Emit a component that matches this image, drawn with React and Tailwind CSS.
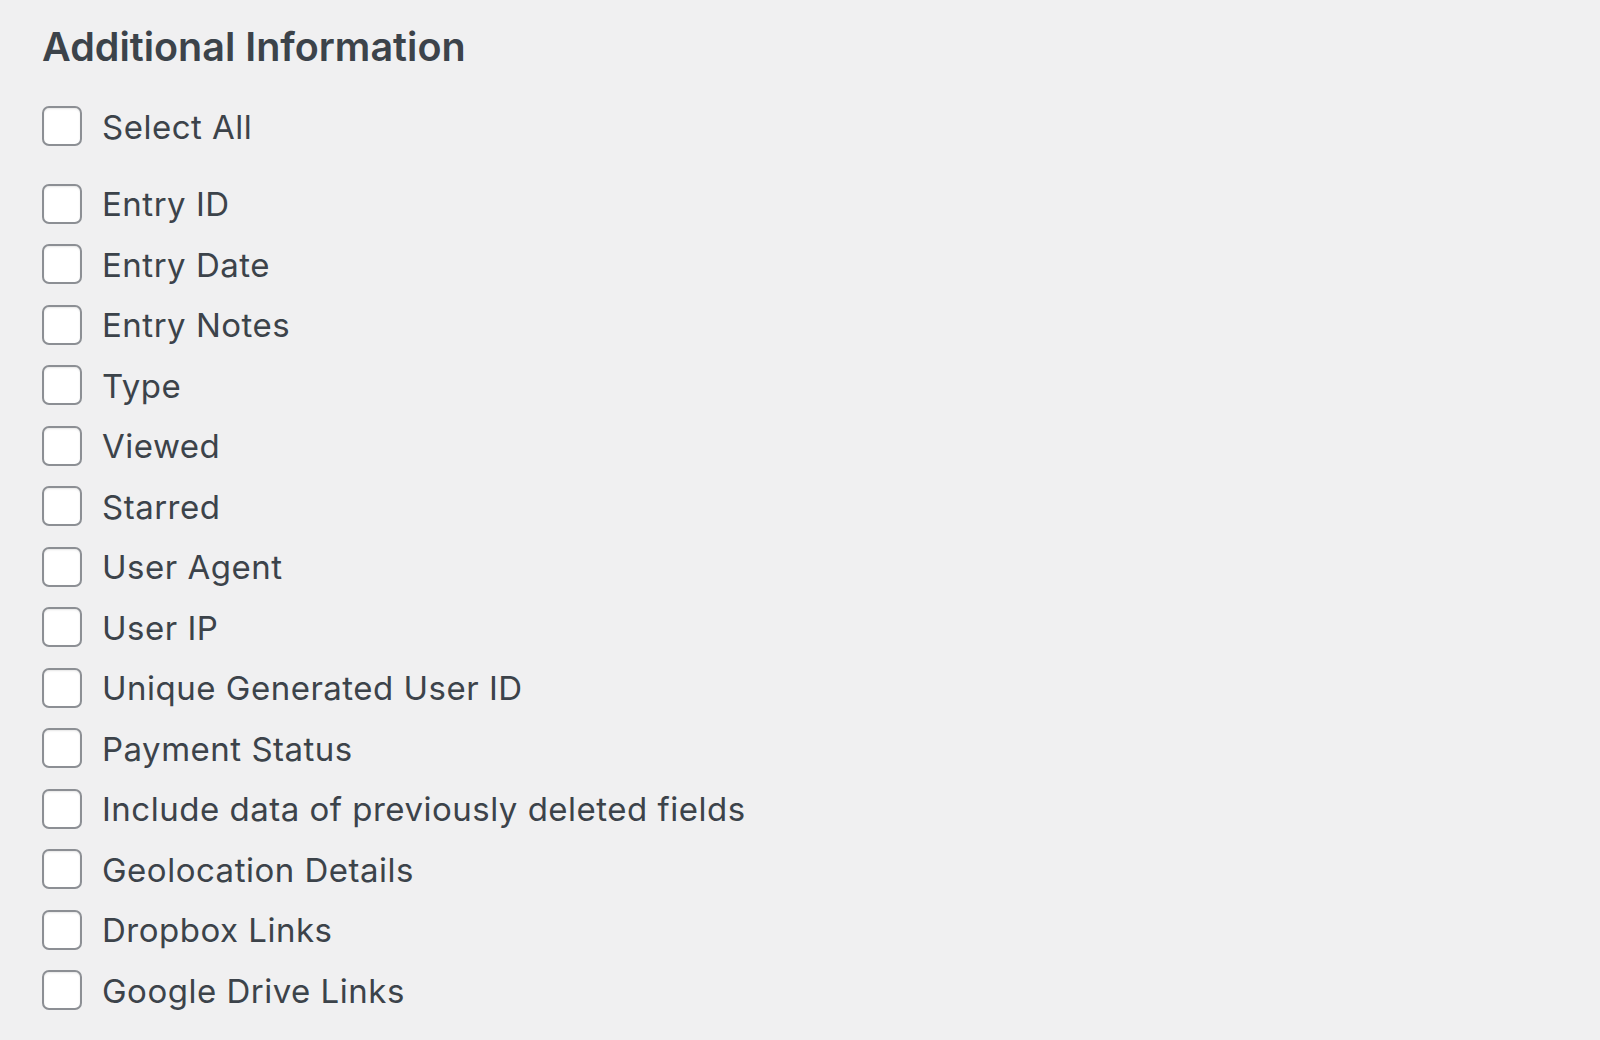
import React from 'react';

const fields = [
  'Entry ID',
  'Entry Date',
  'Entry Notes',
  'Type',
  'Viewed',
  'Starred',
  'User Agent',
  'User IP',
  'Unique Generated User ID',
  'Payment Status',
  'Include data of previously deleted fields',
  'Geolocation Details',
  'Dropbox Links',
  'Google Drive Links'
];

const CheckRow = ({ label }) => {
  return (
    <label className="flex items-center h-[60.5px] cursor-pointer">
      <input
        type="checkbox"
        className="appearance-none w-10 h-10 shrink-0 bg-white border-2 border-[#8c8f94] rounded-[7px] shadow-[inset_0_1px_2px_rgba(0,0,0,0.1)]"
      />
      <span className="ml-[20px] pt-[2px] text-[33px] tracking-[0.5px] text-[#3c434a]">{label}</span>
    </label>
  );
};

const App = () => {
  return (
    <div
      className="min-h-[1040px] w-full bg-[#f0f0f1] pl-[42px] pt-[22px]"
      style={{ fontFamily: 'Inter, "Liberation Sans", Arial, sans-serif' }}
    >
      <h2 className="text-[39.5px] leading-[50px] font-semibold text-[#3c434a]">
        Additional Information
      </h2>

      <div className="mt-6">
        <CheckRow label="Select All" />
      </div>

      {/* Field list */}
      <div className="mt-[17px]">
        {fields.map((f) => (
          <CheckRow key={f} label={f} />
        ))}
      </div>
    </div>
  );
};

export default App;
